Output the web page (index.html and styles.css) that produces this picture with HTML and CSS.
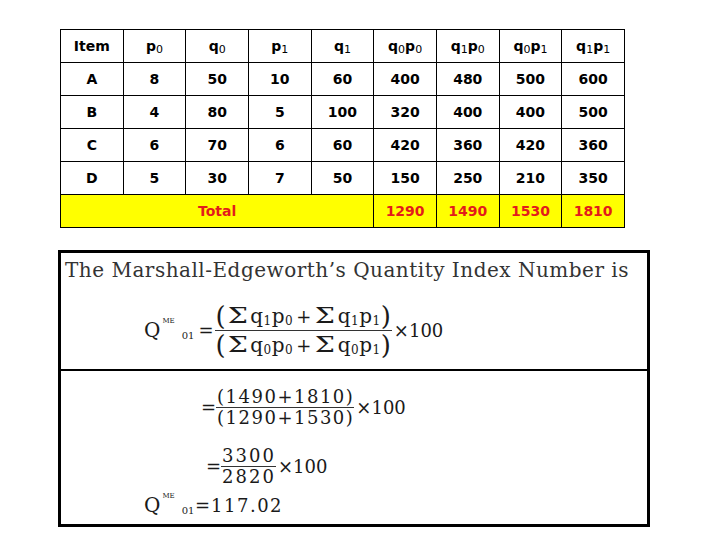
FILE: index.html
```html
<!DOCTYPE html>
<html>
<head>
<meta charset="utf-8">
<link rel="stylesheet" href="styles.css">
</head>
<body>
<div class="page">
  <table class="data">
    <tr>
      <td>Item</td>
      <td>p<sub>0</sub></td>
      <td>q<sub>0</sub></td>
      <td>p<sub>1</sub></td>
      <td>q<sub>1</sub></td>
      <td>q<sub>0</sub>p<sub>0</sub></td>
      <td>q<sub>1</sub>p<sub>0</sub></td>
      <td>q<sub>0</sub>p<sub>1</sub></td>
      <td>q<sub>1</sub>p<sub>1</sub></td>
    </tr>
    <tr><td>A</td><td>8</td><td>50</td><td>10</td><td>60</td><td>400</td><td>480</td><td>500</td><td>600</td></tr>
    <tr><td>B</td><td>4</td><td>80</td><td>5</td><td>100</td><td>320</td><td>400</td><td>400</td><td>500</td></tr>
    <tr><td>C</td><td>6</td><td>70</td><td>6</td><td>60</td><td>420</td><td>360</td><td>420</td><td>360</td></tr>
    <tr><td>D</td><td>5</td><td>30</td><td>7</td><td>50</td><td>150</td><td>250</td><td>210</td><td>350</td></tr>
    <tr class="total"><td colspan="5">Total</td><td>1290</td><td>1490</td><td>1530</td><td>1810</td></tr>
  </table>

  <div class="box">
    <div class="top">
      <p class="title">The Marshall-Edgeworth’s Quantity Index Number is</p>
      <div class="eq main">
        <span class="qme"><span class="qq">Q</span><span class="me">ME</span><span class="zo">01</span></span>
        <span class="eqsign">=</span>
        <span class="frac">
          <span class="num"><span class="paren">(</span><span class="sig">Σ</span><span class="term">q<sub>1</sub>p<sub>0</sub></span><span class="plus">+</span><span class="sig">Σ</span><span class="term">q<sub>1</sub>p<sub>1</sub></span><span class="paren">)</span></span>
          <span class="den"><span class="paren">(</span><span class="sig">Σ</span><span class="term">q<sub>0</sub>p<sub>0</sub></span><span class="plus">+</span><span class="sig">Σ</span><span class="term">q<sub>0</sub>p<sub>1</sub></span><span class="paren">)</span></span>
        </span>
        <span class="times">×100</span>
      </div>
    </div>
    <div class="bottom">
      <div class="row r1">
        <span class="lbl"></span>
        <span class="eq"><span class="eqsign">=</span><span class="frac"><span class="num">(1490+1810)</span><span class="den">(1290+1530)</span></span><span class="times">×100</span></span>
      </div>
      <div class="row r2">
        <span class="lbl"></span>
        <span class="eq"><span class="eqsign">=</span><span class="frac"><span class="num">3300</span><span class="den">2820</span></span><span class="times">×100</span></span>
      </div>
      <div class="row r3">
        <span class="lbl"><span class="qme"><span class="qq">Q</span><span class="me">ME</span><span class="zo">01</span></span></span>
        <span class="eq"><span class="eqsign">=</span><span class="res">117.02</span></span>
      </div>
    </div>
  </div>
</div>
</body>
</html>
```

FILE: styles.css
```css
html, body {
  margin: 0;
  padding: 0;
  background: #fff;
}

.page {
  padding: 29px 0 0 60px;
}

.data {
  border-collapse: collapse;
  width: 565px;
  table-layout: fixed;
  font-family: "DejaVu Sans", Verdana, sans-serif;
  font-weight: bold;
  font-size: 14px;
  color: #000;
}

.data td {
  border: 1px solid #000;
  height: 32px;
  padding: 0;
  text-align: center;
  vertical-align: middle;
  background: #fff;
}

.data sub {
  font-size: 11px;
  font-weight: normal;
  vertical-align: -2px;
  line-height: 0;
}

.data .total td {
  background: #ffff00;
  color: #e31b1b;
}

.box {
  margin: 22px 0 0 -2px;
  width: 586px;
  height: 271px;
  border: 3px solid #000;
  display: flex;
  flex-direction: column;
  overflow: hidden;
  font-family: "DejaVu Serif", "Liberation Serif", serif;
  color: #1a1a1a;
}

.top {
  flex: 0 0 118px;
  height: 118px;
  border-bottom: 2px solid #000;
  padding: 5px 0 0 4px;
  box-sizing: border-box;
}

.title {
  margin: 0;
  font-size: 20px;
  line-height: 24px;
  letter-spacing: 0.5px;
  color: #333;
}

.eq {
  display: flex;
  align-items: center;
}

.main {
  margin: 20px 0 0 79px;
}

/* Q with ME superscript and 01 subscript */
.qme {
  display: inline-block;
  white-space: nowrap;
  line-height: 20px;
}

.qq {
  font-size: 20px;
}

.me {
  font-size: 7px;
  line-height: 0;
  vertical-align: 14px;
  margin-left: 2px;
}

.zo {
  font-size: 10px;
  line-height: 0;
  vertical-align: -2px;
  margin-left: 7px;
}

.eqsign {
  font-size: 18px;
}

.main .eqsign {
  margin: 0 1px 0 4px;
}

.frac {
  display: inline-flex;
  flex-direction: column;
  align-items: center;
}

.num, .den {
  white-space: nowrap;
}

.main .num, .main .den {
  display: flex;
  align-items: center;
  height: 28px;
  padding: 0 1px;
}

.num {
  border-bottom: 1.5px solid #333;
}

.paren {
  font-size: 26px;
  line-height: 28px;
}

.sig {
  display: inline-block;
  font-size: 22px;
  line-height: 28px;
  transform: scaleX(1.3);
  margin: 0 5px 0 4px;
}

.term {
  display: inline-block;
  font-size: 20px;
  line-height: 28px;
  letter-spacing: 0.5px;
}

.term sub {
  font-size: 12px;
  line-height: 0;
  vertical-align: -2px;
}

.plus {
  font-size: 18px;
  margin: 0 2px 0 3px;
}

.times {
  font-size: 18px;
  margin-left: 2px;
}

.bottom {
  flex: 1 1 auto;
  min-height: 0;
  padding: 16px 0 0 83px;
}

.row {
  display: grid;
  grid-template-columns: 51px auto;
  align-items: center;
  font-size: 18px;
}

.row .num, .row .den {
  line-height: 20px;
  letter-spacing: 1.5px;
  padding-left: 1px;
}

.r1 .eq {
  margin-left: 6px;
}

.r2 {
  margin-top: 18px;
}

.r2 .eq {
  margin-left: 11px;
}

.r2 .num, .r2 .den {
  letter-spacing: 2px;
}

.r3 {
  margin-top: 8px;
  height: 20px;
  line-height: 20px;
}

.res {
  letter-spacing: 1.5px;
  margin-left: 1px;
}
```
